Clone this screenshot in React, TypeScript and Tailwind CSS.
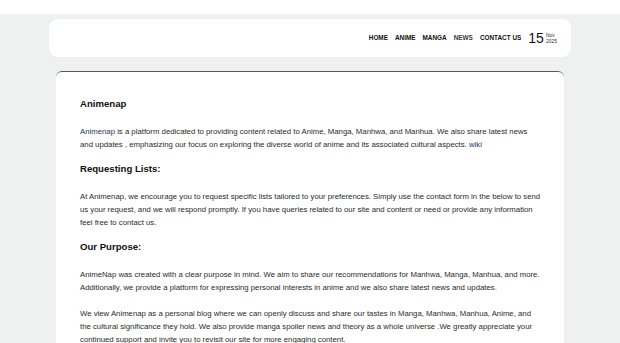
const NAV = [
  { label: "HOME", muted: false },
  { label: "ANIME", muted: false },
  { label: "MANGA", muted: false },
  { label: "NEWS", muted: true },
  { label: "CONTACT US", muted: false },
];

function Header() {
  return (
    <header className="mx-auto w-[522px] h-[38px] rounded-[9px] bg-white flex items-center justify-end pr-[14px]">
      <nav className="flex items-center gap-[7px]">
        {NAV.map((item) => (
          <a
            key={item.label}
            className={`text-[6.4px] font-bold ${item.muted ? "text-[#3a3a3a]" : "text-[#111]"}`}
          >
            {item.label}
          </a>
        ))}
      </nav>
      <div className="flex items-center ml-[7px] text-[#111]">
        <span className="text-[14px] leading-none">15</span>
        <span className="flex flex-col ml-[2px] text-[5px] leading-[6px] text-[#333]">
          <span>Nov</span>
          <span>2025</span>
        </span>
      </div>
    </header>
  );
}

function Heading({ children }: { children: React.ReactNode }) {
  return <h2 className="text-[9.6px] font-bold text-[#111] leading-[12px]">{children}</h2>;
}

function Para({ children }: { children: React.ReactNode }) {
  return <p className="text-[7.77px] leading-[13px] text-[#2b2b2b]">{children}</p>;
}

export default function App() {
  return (
    <div
      className="w-[620px] h-[343px] overflow-hidden bg-[#eef1f0]"
      style={{ fontFamily: '"Liberation Sans", Arial, sans-serif' }}
    >
      <div className="h-[14px] bg-white" />
      <div className="pt-[5px]">
        <Header />
        <main className="mx-auto mt-[14px] w-[508px] bg-white rounded-[6px] border-t-[1.5px] border-t-[#5a5a5a] pl-[24px] pr-[23px] pt-[26px] pb-[20px] flex flex-col">
          <Heading>Animenap</Heading>
          <div className="mt-[15px]">
            <Para>
              <a className="text-[#1d3566]">Animenap</a> is a platform dedicated to providing content related to Anime,
              Manga, Manhwa, and Manhua. We also share latest news and updates , emphasizing our focus on exploring the
              diverse world of anime and its associated cultural aspects. <a className="text-[#1d3566]">wiki</a>
            </Para>
          </div>
          <div className="mt-[12px]">
            <Heading>Requesting Lists:</Heading>
          </div>
          <div className="mt-[15px]">
            <Para>
              At Animenap, we encourage you to request specific lists tailored to your preferences. Simply use the
              contact form in the below to send us your request, and we will respond promptly. If you have queries
              related to our site and content or need or provide any information feel free to contact us.
            </Para>
          </div>
          <div className="mt-[12px]">
            <Heading>Our Purpose:</Heading>
          </div>
          <div className="mt-[15px] flex flex-col gap-[13px]">
            <Para>
              AnimeNap was created with a clear purpose in mind. We aim to share our recommendations for Manhwa, Manga,
              Manhua, and more. Additionally, we provide a platform for expressing personal interests in anime and we
              also share latest news and updates.
            </Para>
            <Para>
              We view Animenap as a personal blog where we can openly discuss and share our tastes in Manga, Manhwa,
              Manhua, Anime, and the cultural significance they hold. We also provide manga spoiler news and theory as a
              whole universe .We greatly appreciate your continued support and invite you to revisit our site for more
              engaging content.
            </Para>
          </div>
        </main>
      </div>
    </div>
  );
}
